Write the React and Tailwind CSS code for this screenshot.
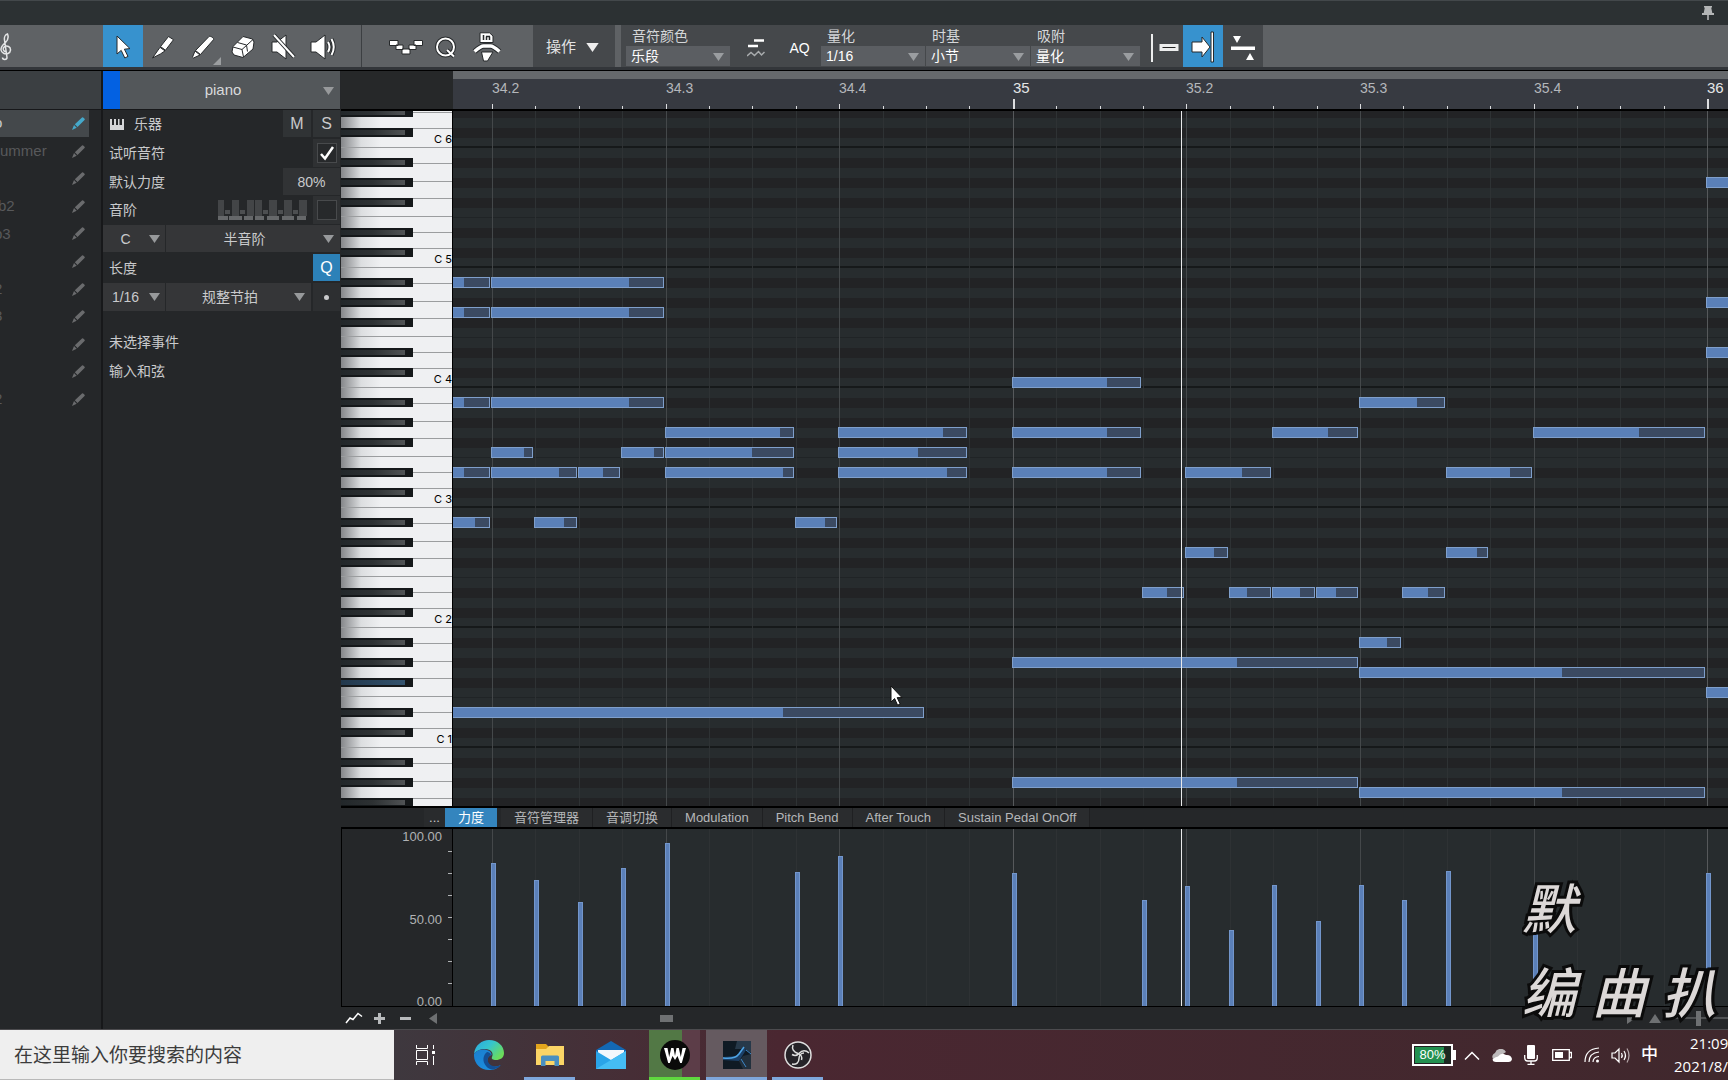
import { useState } from 'react';
import clsx from 'clsx';

// Timeline units: one step is a 16th note
const STEP = 43.4;
const ORIGIN = 39;
const PLAYHEAD = 728;

const stepX = (step) => Math.round(ORIGIN + step * STEP);

const TRACKS = [
  { name: 'o', shift: '-ml-1.5', active: true },
  { name: 'ummer', shift: '' },
  { name: '', shift: '' },
  { name: 'b2', shift: '-ml-0.5' },
  { name: 'b3', shift: '-ml-1.5' },
  { name: '', shift: '' },
  { name: '2', shift: '-ml-1.5' },
  { name: '3', shift: '-ml-1.5' },
  { name: '', shift: '' },
  { name: '', shift: '' },
  { name: '2', shift: '-ml-1.5' },
];

const BEATS = [
  { step: 0, label: '34.2' },
  { step: 4, label: '34.3' },
  { step: 8, label: '34.4' },
  { step: 12, label: '35', bar: true },
  { step: 16, label: '35.2' },
  { step: 20, label: '35.3' },
  { step: 24, label: '35.4' },
  { step: 28, label: '36', bar: true },
];

const STEPS = Array.from({ length: 29 }, (_, i) => i);

// [row, start, length, velocity]
const NOTES = [
  [14, -1, 1, 0.38], [14, 0, 4, 0.8],
  [17, -1, 1, 0.38], [17, 0, 4, 0.8],
  [26, -1, 1, 0.38], [26, 0, 4, 0.8],
  [31, 0, 1, 0.8], [31, 3, 1, 0.77], [31, 4, 3, 0.68], [31, 8, 3, 0.62],
  [33, -1, 1, 0.38], [33, 0, 2, 0.8], [33, 2, 1, 0.59], [33, 4, 3, 0.92], [33, 8, 3, 0.85],
  [38, -1, 1, 0.65], [38, 1, 1, 0.71], [38, 7, 1, 0.72],
  [29, 4, 3, 0.9], [29, 8, 3, 0.82],
  [57, -2, 12, 0.73],
  [24, 12, 3, 0.74], [29, 12, 3, 0.74], [33, 12, 3, 0.74],
  [45, 15, 1, 0.6], [45, 17, 1, 0.42], [45, 18, 1, 0.66], [45, 19, 1, 0.47], [45, 21, 1, 0.6],
  [33, 16, 2, 0.67], [41, 16, 1, 0.68],
  [29, 18, 2, 0.66],
  [52, 12, 8, 0.65], [64, 12, 8, 0.65],
  [53, 20, 8, 0.588], [65, 20, 8, 0.588],
  [50, 20, 1, 0.68], [26, 20, 2, 0.68],
  [33, 22, 2, 0.75], [41, 22, 1, 0.76],
  [29, 24, 4, 0.62],
  [4, 28, 4, 0.74], [16, 28, 4, 0.74], [21, 28, 4, 0.74], [55, 28, 4, 0.74],
];

const VELOCITIES = [
  [0, 0.81], [1, 0.71], [2, 0.585], [3, 0.78], [4, 0.92], [7, 0.755], [8, 0.85], [12, 0.75],
  [15, 0.6], [16, 0.68], [17, 0.43], [18, 0.685], [19, 0.48], [20, 0.685], [21, 0.6],
  [22, 0.765], [24, 0.6], [28, 0.75],
];

// B A# A G# G F# F E D# D C# C
const ROW_IS_BLACK = [false, true, false, true, false, true, false, false, true, false, true, false];
const OCTAVES = [6, 5, 4, 3, 2, 1, 0];
const WHITE_KEYS = [
  ['B', 'h-[16px]'],
  ['A', 'h-[18px]'],
  ['G', 'h-[17px]'],
  ['F', 'h-[18px]'],
  ['E', 'h-[16px]'],
  ['D', 'h-[16px]'],
  ['C', 'h-[19px]'],
];
const BLACK_KEYS = [
  ['A#', 'top-[10px]'],
  ['G#', 'top-[30px]'],
  ['F#', 'top-[50px]'],
  ['D#', 'top-[80px]'],
  ['C#', 'top-[100px]'],
];

const LANES = ['力度', '音符管理器', '音调切换', 'Modulation', 'Pitch Bend', 'After Touch', 'Sustain Pedal OnOff'];

function Icon({ className, viewBox, children }) {
  return (
    <svg className={clsx('shrink-0', className)} viewBox={viewBox} fill="#fff" stroke="#26292b" strokeWidth="1" strokeLinejoin="round" aria-hidden="true">
      {children}
    </svg>
  );
}

function Caret({ className }) {
  return (
    <svg className={clsx('pointer-events-none absolute', className)} width="11" height="8" viewBox="0 0 11 8" aria-hidden="true">
      <path d="M0 0h11L5.5 8z" fill="currentColor" />
    </svg>
  );
}

function ToolButton({ label, active, onClick, className, children }) {
  return (
    <button
      aria-label={label}
      aria-pressed={active}
      onClick={onClick}
      className={clsx('relative flex shrink-0 items-center justify-center self-stretch pt-0.5', active && 'bg-[#3792ce]', className)}
    >
      {children}
    </button>
  );
}

function ToolbarSelect({ label, value, className }) {
  return (
    <label className={clsx('relative flex shrink-0 flex-col', className)}>
      <span className="h-[21px] pl-[6px] leading-[22px] text-[#d5d7d9]">{label}</span>
      <select className="h-5 w-full appearance-none bg-[#5b5e62] pl-[5px] text-sm leading-5 text-white outline-none">
        <option>{value}</option>
      </select>
      <Caret className="right-[6px] bottom-[6px] text-[#9a9da0]" />
    </label>
  );
}

const TOOLS = [
  {
    id: 'arrow', label: '箭头', width: 'w-10',
    icon: <Icon className="h-6 w-4" viewBox="0 0 16 24"><path d="M2 1v18l4.2-3.6 3.6 7.6 3.2-1.6-3.6-7.2 5.6-.6z" /></Icon>,
  },
  {
    id: 'split', label: '分割', width: 'w-10',
    icon: <Icon className="h-6 w-6" viewBox="0 0 24 24"><path d="M17.500 1.500l5 3.200-8 10.500-5-3.600z" /><path d="M9 12.300l5 3.600-4.500 3L1.500 23z" /></Icon>,
  },
  {
    id: 'paint', label: '绘画', width: 'w-10', corner: true,
    icon: <Icon className="h-6 w-6" viewBox="0 0 24 24"><path d="M18 1.500c1-1 5.500 1.500 4.500 3.200L9.500 19.500 4.500 15.500z" /><path d="M4 16l5 4-6.500 3-1-.8z" /></Icon>,
  },
  {
    id: 'erase', label: '橡皮', width: 'w-10',
    icon: (
      <Icon className="h-6 w-6" viewBox="0 0 24 24">
        <path d="M12 1.500l9.500 2.500 1.500 3-1 7L12 22.500 3 20l-2-3 1-5.500z" />
        <path d="M2 12l9 2.500L22 4.500M11 14.500l1.500 7.500M6.500 7.500l9 2.500 1 6.500" fill="none" />
      </Icon>
    ),
  },
  {
    id: 'mute', label: '静音', width: 'w-10',
    icon: (
      <Icon className="h-7 w-7" viewBox="0 0 28 28">
        <path d="M3 9h5l9-7v24l-9-7H3z" />
        <path d="M5 2l20 22" stroke="#26292b" strokeWidth="4" />
        <path d="M5 2l20 22" stroke="#fff" strokeWidth="2" />
      </Icon>
    ),
  },
  {
    id: 'listen', label: '听', width: 'w-10',
    icon: (
      <Icon className="h-7 w-7" viewBox="0 0 28 28">
        <path d="M2 9h5l9-7v24l-9-7H2z" />
        <path d="M19 9q3 5 0 10M22.500 6q4.500 8 0 16" fill="none" stroke="#26292b" strokeWidth="4" />
        <path d="M19 9q3 5 0 10M22.500 6q4.500 8 0 16" fill="none" stroke="#fff" strokeWidth="2" />
      </Icon>
    ),
  },
];

function Toolbar() {
  const [tool, setTool] = useState('arrow');

  return (
    <div className="flex h-[42px] shrink-0 items-center overflow-hidden bg-[#5f6265] text-sm text-white">
      <button aria-label="乐谱" className="flex h-full w-[103px] shrink-0 items-center pt-0.5">
        <svg className="-ml-0.5 h-7 w-4" viewBox="0 0 16 28" fill="none" stroke="#e4e5e6" strokeWidth="1.500" aria-hidden="true">
          <path d="M9 24.500c0 2.500-4.500 2.500-4.500 0M9 24.500L6.500 7c-.5-3 1-5.500 3-6 1.500 3.500.5 6-2 8.500S2.500 14 3 17s4 4.500 7 3.500 3.500-5.500.5-7-6 .5-5 3.500c.4 1 1 1.500 2 1.800" />
        </svg>
      </button>
      {TOOLS.map((item) => (
        <ToolButton key={item.id} label={item.label} active={tool === item.id} onClick={() => setTool(item.id)} className={item.width}>
          {item.icon}
          {item.corner && (
            <svg className="absolute right-0.5 bottom-0.5 h-2 w-2" viewBox="0 0 8 8" aria-hidden="true">
              <path d="M8 0v8H0z" fill="#9b9ea0" />
            </svg>
          )}
        </ToolButton>
      ))}
      <div className="ml-[18px] h-full w-px shrink-0 bg-[#3c3f42]" />

      <ToolButton label="音符模式" className="ml-[22px] w-11">
        <Icon className="h-4 w-[34px]" viewBox="0 0 34 16">
          <path d="M.5 1.500h8.500v5H.5zM25 1.500h8.500v5H25zM7 6h7v4.500H7zM20 6h7v4.500h-7zM13 10h8v5h-8z" />
        </Icon>
      </ToolButton>
      <ToolButton label="量化" className="w-9">
        <svg className="h-6 w-6" viewBox="0 0 24 24" fill="none" aria-hidden="true">
          <g stroke="#26292b" strokeWidth="4"><circle cx="11.500" cy="12" r="8.500" /><path d="M13 15l7 6.500" /></g>
          <g stroke="#fff" strokeWidth="2"><circle cx="11.500" cy="12" r="8.500" /><path d="M13 15l7 6.500" /></g>
        </svg>
      </ToolButton>
      <ToolButton label="人性化" className="w-[46px]">
        <Icon className="h-[30px] w-[30px]" viewBox="0 0 30 30">
          <path d="M8 .8h9.500L21 4v6.500H8z" />
          <path d="M11.500 3v5M14.500 4.500v3.500M17.500 4.500v3.500M14 4.500h4" fill="none" strokeWidth="1.500" />
          <path d="M2.500 19.500Q9 14 11.500 14h7q2.500 0 9 5.500" fill="none" strokeWidth="5.500" />
          <path d="M2.500 19.500Q9 14 11.500 14h7q2.500 0 9 5.500" fill="none" stroke="#fff" strokeWidth="3.500" />
          <path d="M9.500 20h11.500l-5.500 9h-4z" />
        </Icon>
      </ToolButton>

      <button className="ml-[23px] flex h-full w-[82px] shrink-0 items-center bg-[#45484b] pt-0.5 pl-[13px] text-[15px] text-[#e2e3e4]">
        操作
        <svg className="ml-2.5" width="13" height="9" viewBox="0 0 11 8" aria-hidden="true"><path d="M0 0h11L5.500 8z" fill="#eee" /></svg>
      </button>

      <div className="ml-[6px] flex h-full shrink-0 items-stretch bg-[#45484b] pl-[5px]">
        <ToolbarSelect label="音符颜色" value="乐段" className="w-[104px]" />
        <button aria-label="力度曲线" className="flex w-[52px] items-center justify-center pt-1">
          <svg className="h-5 w-[18px]" viewBox="0 0 18 20" fill="none" aria-hidden="true">
            <path d="M7 2.500h10M1 8h10" stroke="#fff" strokeWidth="2.500" />
            <path d="M0 18l4-3.500 3.500 3 4-4 3 3.500 3-3" stroke="#a9acae" strokeWidth="1.500" />
          </svg>
        </button>
        <button className="w-[39px] pt-1 pr-1 text-sm text-white">AQ</button>
        <ToolbarSelect label="量化" value="1/16" className="w-[104px]" />
        <ToolbarSelect label="时基" value="小节" className="ml-px w-[104px]" />
        <ToolbarSelect label="吸附" value="量化" className="ml-px w-[109px]" />
        <button aria-label="吸附到光标" className="flex w-[43px] items-center justify-end pt-1">
          <svg className="mr-1 h-8 w-7" viewBox="0 0 28 32" aria-hidden="true">
            <path d="M0 2h2v28H0z" fill="#eceded" />
            <path d="M10 13.500h16v4H10z" fill="#222" stroke="#eceded" strokeWidth="3" />
          </svg>
        </button>
        <ToolButton label="吸附" active className="w-10">
          <Icon className="h-8 w-6" viewBox="0 0 24 32">
            <path d="M1 11h10V6l8 10-8 10v-5H1z" />
            <path d="M20 1h2.500v30H20z" />
          </Icon>
        </ToolButton>
        <button aria-label="对齐" className="flex w-10 items-center justify-center pt-1">
          <svg className="h-7 w-[26px]" viewBox="0 0 26 28" fill="#fff" aria-hidden="true">
            <path d="M1 12.500h24v3.500H1zM3 2h8l-4 7zM16 26h8l-4-7z" />
          </svg>
        </button>
      </div>
    </div>
  );
}

function Pencil({ className }) {
  return (
    <svg className={clsx('h-[13px] w-[13px]', className)} viewBox="0 0 13 13" fill="currentColor" aria-hidden="true">
      <path d="M10 .5q.8-.5 1.500.2l1 1q.6.700 0 1.400L5.500 10 2.800 7.300zM2 8.100L4.700 10.800 0 13z" />
    </svg>
  );
}

function TrackList() {
  return (
    <aside className="w-[103px] shrink-0 border-r-2 border-[#17181a] bg-[#252729]">
      <div className="h-[38px] bg-[#3b3f42]" />
      <div className="flex h-[304px] flex-col justify-between border-t border-[#17181a]">
        {TRACKS.map((track, i) => (
          <div
            key={i}
            className={clsx(
              'mr-3 flex h-[27px] items-center justify-between overflow-hidden pr-[4px] text-[15px]',
              track.active ? 'bg-[#44484b] text-[#c8cacc]' : 'text-[#58595b]'
            )}
          >
            <span className={track.shift}>{track.name}</span>
            <button aria-label="编辑音轨">
              <Pencil className={track.active ? 'text-[#45a8ca]' : 'text-[#6a6b6d]'} />
            </button>
          </div>
        ))}
      </div>
    </aside>
  );
}

function PanelSelect({ label, value, className, caret }) {
  return (
    <div className={clsx('relative h-full', className)}>
      <select
        aria-label={label}
        className="h-full w-full appearance-none bg-[#353638] pr-[17px] text-sm text-[#c9cacc] outline-none [text-align-last:center]"
      >
        <option>{value}</option>
      </select>
      <Caret className={clsx('top-[10px] text-[#97999b]', caret)} />
    </div>
  );
}

function Checkbox({ id, checked, onChange }) {
  return (
    <span className="relative flex h-[28px] w-[27px] items-center justify-center bg-[#2f3133]">
      <input id={id} type="checkbox" checked={checked} onChange={onChange} className="h-5 w-5 appearance-none border border-[#484a4c] bg-[#27292b]" />
      {checked && (
        <svg className="pointer-events-none absolute h-4 w-4" viewBox="0 0 16 16" fill="none" stroke="#fff" strokeWidth="2.500" aria-hidden="true">
          <path d="M2 9l4 4.500L14 2" />
        </svg>
      )}
    </span>
  );
}

function Inspector() {
  const [audition, setAudition] = useState(true);
  const [scale, setScale] = useState(false);

  return (
    <aside className="w-[238px] shrink-0 bg-[#252729] pr-px text-sm text-[#c9cacc]">
      <div className="relative flex h-[38px] bg-[#53575a]">
        <div className="w-[17px] bg-[#0361e2]" />
        <select aria-label="音轨" className="min-w-0 flex-1 appearance-none bg-transparent pr-[14px] text-[15px] text-[#d8dadb] outline-none [text-align-last:center]">
          <option>piano</option>
        </select>
        <Caret className="top-4 right-[6px] text-[#97999b]" />
      </div>
      <div className="border-t border-[#17181a]">
        <div className="flex h-[29px] items-start justify-between">
          <span className="flex h-[28px] items-center pl-[7px]">
            <svg className="mr-[10px] h-[11px] w-[14px]" viewBox="0 0 14 11" fill="#d5d6d8" aria-hidden="true">
              <path d="M0 0h2v6h2V0h2v6h2V0h1.500v6h2.500V0h2v11H0z" />
            </svg>
            乐器
          </span>
          <span className="flex gap-[2px]">
            <button className="h-[27px] w-[28px] bg-[#303335] text-base">M</button>
            <button className="h-[27px] w-[27px] bg-[#303335] text-base">S</button>
          </span>
        </div>
        <div className="flex h-[29px] items-start justify-between">
          <label htmlFor="audition" className="pl-[6px] leading-[28px]">试听音符</label>
          <Checkbox id="audition" checked={audition} onChange={(e) => setAudition(e.target.checked)} />
        </div>
        <div className="flex h-[28px] items-start justify-between">
          <label htmlFor="velocity" className="pl-[6px] leading-[28px]">默认力度</label>
          <input id="velocity" defaultValue="80%" className="h-[27px] w-[57px] bg-[#313335] text-center outline-none" />
        </div>
        <div className="flex h-[29px] items-start">
          <label htmlFor="scale" className="mr-auto pl-[6px] leading-[28px]">音阶</label>
          <svg className="mt-[4px] mr-[6px] h-5 w-[89px]" viewBox="0 0 89 20" aria-hidden="true">
            <path d="M0 0h6v16H0zM14 0h7v16h-7zM29 0h7v16h-7zM37 0h7v16h-7zM51 0h8v16h-8zM66 0h8v16h-8zM81 0h8v16h-8z" fill="#434547" />
            <path d="M7 10h5v4H7zM22 10h5v4h-5zM45 10h5v4h-5zM60 10h5v4h-5zM75 10h5v4h-5z" fill="#4d4f51" />
            <path d="M0 16h10v4H0zM11 16h13v4H11zM26 16h9v4h-9zM37 16h9v4h-9zM49 16h12v4H49zM64 16h12v4H64zM79 16h9v4h-9z" fill="#66686a" />
          </svg>
          <Checkbox id="scale" checked={scale} onChange={(e) => setScale(e.target.checked)} />
        </div>
        <div className="flex h-[29px] gap-px pb-[2px]">
          <PanelSelect label="根音" value="C" className="w-[62px]" caret="right-[5px]" />
          <PanelSelect label="音阶类型" value="半音阶" className="flex-1" caret="right-[6px]" />
        </div>
        <div className="flex h-[29px] items-start justify-between">
          <span className="pl-[6px] leading-[28px]">长度</span>
          <button className="h-[27px] w-[27px] bg-[#2c81b8] text-base text-white">Q</button>
        </div>
        <div className="flex h-[29px] gap-px pb-px">
          <PanelSelect label="长度" value="1/16" className="w-[62px]" caret="right-[5px]" />
          <PanelSelect label="拍型" value="规整节拍" className="flex-1" caret="right-[6px]" />
          <button aria-label="附点" className="ml-px flex w-[27px] items-center justify-center bg-[#2d2f31]">
            <span className="h-[5px] w-[5px] rounded-full bg-[#c9cacc]" />
          </button>
        </div>
        <p className="mt-[16px] h-[29px] pl-[6px] leading-[29px]">未选择事件</p>
        <p className="h-[29px] pl-[6px] leading-[29px]">输入和弦</p>
      </div>
    </aside>
  );
}

function Ruler() {
  return (
    <div className="relative min-w-0 flex-1 overflow-hidden border-t-8 border-[#66696c] bg-[#373a41]">
      {STEPS.map((step) => (
        <span
          key={step}
          className={clsx('absolute bottom-0 bg-[#dcdddf]', step === 12 || step === 28 ? 'h-[10px] w-[2px]' : step % 4 === 0 ? 'h-[5px] w-px' : 'h-[3px] w-px')}
          style={{ left: stepX(step) }}
        />
      ))}
      {BEATS.map((beat) => (
        <span
          key={beat.label}
          className={clsx('absolute top-0 leading-[18px]', beat.bar ? 'text-[15px] text-[#e4e5e7]' : 'text-sm text-[#b4b7bb]')}
          style={{ left: stepX(beat.step) }}
        >
          {beat.label}
        </span>
      ))}
    </div>
  );
}

function Keyboard() {
  return (
    <div className="relative w-[112px] shrink-0 overflow-hidden border-r border-black bg-[#edeef0]">
      <div className="-mt-[83px]">
        {OCTAVES.map((octave) => (
          <div key={octave} className="relative h-[120px]">
            {WHITE_KEYS.map(([name, height]) => (
              <button
                key={name}
                aria-label={name + octave}
                className={clsx(
                  'block w-full border-b border-[#9b9d9f] bg-linear-to-r from-[#85878a] via-[#dcdee0] via-18% to-[#eff0f2] to-36% text-right font-[Inter] text-[11px] leading-[21px] text-black',
                  height
                )}
              >
                {name === 'C' ? 'C ' + octave : ''}
              </button>
            ))}
            {BLACK_KEYS.map(([name, top]) => (
              <button
                key={name}
                aria-label={name + octave}
                className={clsx(
                  'absolute left-0 h-[9px] w-[72px] border-y-2 border-r-8 border-[#15181a] bg-linear-to-r',
                  octave === 1 && name === 'F#' ? 'from-[#22384c] to-[#34536e]' : 'from-[#22272a] via-[#2d3133] to-[#505355]',
                  top
                )}
              />
            ))}
          </div>
        ))}
      </div>
    </div>
  );
}

function GridLines() {
  return STEPS.map((step) => (
    <span
      key={step}
      className={clsx('absolute inset-y-0 w-px', step === 12 || step === 28 ? 'bg-[#56595b]' : step % 4 === 0 ? 'bg-[#44484a]' : 'bg-[#2e3234]')}
      style={{ left: stepX(step) }}
    />
  ));
}

function NoteGrid() {
  return (
    <div className="relative min-w-0 flex-1 overflow-hidden bg-[#272c2e]">
      <div className="relative -mt-[83px]">
        {OCTAVES.map((octave) => (
          <div key={octave}>
            {ROW_IS_BLACK.map((black, i) => (
              <div
                key={i}
                className={clsx('h-[10px]', black ? 'bg-[#222325]' : 'bg-[#272c2e]', i === 11 && 'border-b-2 border-[#16191a]', i === 6 && 'border-b border-[#202426]')}
              />
            ))}
          </div>
        ))}
      </div>
      <GridLines />
      {NOTES.map(([row, start, length, velocity]) => (
        <div
          key={`${row}-${start}`}
          className="absolute h-[11px] border border-[#7f9fcb] bg-[#3b4a62]"
          style={{ left: stepX(start) - 1, width: stepX(start + length) - stepX(start) - 1, top: 26 + row * 10 }}
        >
          <div className="h-full bg-[#5a80b8]" style={{ width: `${velocity * 100}%` }} />
        </div>
      ))}
      <div className="absolute inset-y-0 w-px bg-[#e8e9ea]" style={{ left: PLAYHEAD }} />
      <svg className="absolute top-[574px] left-[437px] h-[21px] w-[13px]" viewBox="0 0 13 21" aria-hidden="true">
        <path d="M1 1v16l3.600-3.400 3 6.600 2.600-1.200-3-6.400H12z" fill="#fff" stroke="#111" />
      </svg>
    </div>
  );
}

function LaneTabs() {
  const [lane, setLane] = useState('力度');

  return (
    <div className="flex h-[23px] shrink-0 items-stretch border-y-2 border-black bg-[#252729] text-[13px] leading-5">
      <button aria-label="更多" className="ml-[83px] w-[21px] bg-[#292b2d] text-center text-[#c9cacc]">...</button>
      {LANES.map((name, i) => (
        <button
          key={name}
          onClick={() => setLane(name)}
          className={clsx(
            'shrink-0 px-[13px]',
            i === 0 && 'mr-1',
            lane === name ? 'bg-[#3485be] text-white' : 'border-r border-[#1f2022] bg-[#2a2c2e] text-[#b5b7b9]'
          )}
        >
          {name}
        </button>
      ))}
    </div>
  );
}

function VelocityLane() {
  return (
    <div className="flex h-[178px] shrink-0 border-b border-black">
      <div className="flex w-[112px] shrink-0 border-x border-black bg-[#252729] text-[13px] text-[#b0b2b4]">
        <div className="-mb-[3px] flex flex-1 flex-col justify-between pr-[6px] text-right leading-[15px]">
          <span>100.00</span>
          <span>50.00</span>
          <span>0.00</span>
        </div>
        <div className="flex w-[4px] flex-col justify-between">
          {[0, 1, 2, 3, 4, 5, 6, 7, 8].map((i) => (
            <span key={i} className={clsx('h-px', i > 0 && i < 8 && 'bg-[#b0b2b4]')} />
          ))}
        </div>
      </div>
      <div className="relative min-w-0 flex-1 overflow-hidden bg-[#272c2e]">
        <GridLines />
        {VELOCITIES.map(([step, value]) => (
          <div
            key={step}
            className="absolute bottom-0 w-[5px] border-x border-t border-[#7396cb] bg-[#5b80b8]"
            style={{ left: stepX(step) - 1, height: `${value * 100}%` }}
          />
        ))}
        <div className="absolute inset-y-0 w-px bg-[#e8e9ea]" style={{ left: PLAYHEAD }} />
      </div>
    </div>
  );
}

function ScrollRow() {
  return (
    <div className="flex h-[22px] shrink-0 items-center bg-[#252729]">
      <button aria-label="自动化" className="ml-1">
        <svg className="h-3 w-[18px]" viewBox="0 0 18 12" fill="none" stroke="#fff" strokeWidth="1.500" aria-hidden="true">
          <path d="M1 11l4-5 3 1.500L13 1.500l4 3" />
        </svg>
      </button>
      <button aria-label="放大" className="ml-[11px]">
        <svg className="h-[11px] w-[11px]" viewBox="0 0 11 11" fill="#b8babc" aria-hidden="true"><path d="M4 0h3v4h4v3H7v4H4V7H0V4h4z" /></svg>
      </button>
      <button aria-label="缩小" className="ml-[15px]">
        <svg className="h-[11px] w-[11px]" viewBox="0 0 11 11" fill="#b8babc" aria-hidden="true"><path d="M0 4h11v3H0z" /></svg>
      </button>
      <button aria-label="向左" className="ml-[18px]">
        <svg className="h-[11px] w-2" viewBox="0 0 8 11" fill="#6e7072" aria-hidden="true"><path d="M8 0v11L0 5.500z" /></svg>
      </button>
      <div className="flex-1 pl-[223px]">
        <div className="h-[7px] w-[13px] bg-[#6f7173]" />
      </div>
      <button aria-label="向右">
        <svg className="h-[11px] w-2" viewBox="0 0 8 11" fill="#6e7072" aria-hidden="true"><path d="M0 0v11l8-5.500z" /></svg>
      </button>
      <svg className="ml-[14px] h-[9px] w-3" viewBox="0 0 12 9" fill="#6e7072" aria-hidden="true"><path d="M0 9h12L6 0z" /></svg>
      <div className="relative ml-1 flex h-4 w-[63px] items-center">
        <div className="h-[2px] w-full bg-[#505254]" />
        <div className="absolute left-[31px] h-[15px] w-[5px] bg-[#6e7072]" />
      </div>
    </div>
  );
}

function Watermark() {
  return (
    <div className="pointer-events-none absolute right-0 bottom-[44px] w-[206px] overflow-hidden pb-1 font-['Noto_Sans_CJK_SC',sans-serif] text-[54px] leading-[84px] font-medium whitespace-nowrap text-[#dcd8d7] italic [paint-order:stroke_fill] [-webkit-text-stroke:6px_#0b0b0b]">
      <div>默</div>
      <div className="flex gap-4">
        <span>编</span>
        <span>曲</span>
        <span>扒</span>
      </div>
    </div>
  );
}

function EdgeIcon() {
  return (
    <svg className="h-[30px] w-[30px]" viewBox="0 0 30 30" aria-hidden="true">
      <defs>
        <linearGradient id="edgeTop" x1="0" y1="0" x2="1" y2="0.600">
          <stop offset="0" stopColor="#2aa6e0" />
          <stop offset="0.500" stopColor="#35c4cf" />
          <stop offset="1" stopColor="#6bdc5a" />
        </linearGradient>
        <linearGradient id="edgeLow" x1="0" y1="0" x2="0.600" y2="1">
          <stop offset="0" stopColor="#1b7fd0" />
          <stop offset="1" stopColor="#1c8fdd" />
        </linearGradient>
      </defs>
      <path d="M0 14C1 5 8 0 15 0c9 0 15 6 15 13 0 5-4 7-8 7-3 0-5-1-4-3 2-4-1-8-7-8-5 0-9 2-11 5z" fill="url(#edgeTop)" />
      <path d="M0 14c2-3 5-4.500 9-4.500 6 0 9 3 8.500 5.500-3 1-5 4-4 7 2 5 8 6 13 3-3 4-7 5-11.500 5C6 30-.5 23 0 14z" fill="url(#edgeLow)" />
      <path d="M13 12c-4 3-5 9-1 14 2 2.500 5 4 8 3.300 3-.8 5-2 7-4.500-5 3-11 1.700-13-3-1-2.500 0-5.500 3-7-1-2-2.500-3-4-2.800z" fill="#134f94" />
    </svg>
  );
}

function ExplorerIcon() {
  return (
    <svg className="h-6 w-7" viewBox="0 0 28 24" aria-hidden="true">
      <path d="M0 1h10l3 3h14v18H0z" fill="#e3a51d" />
      <path d="M0 6h10l3-3h15v19H0z" fill="#fbd566" />
      <path d="M5 23v-9q0-1.500 1.500-1.500h15q1.500 0 1.500 1.500v9h-4.500v-5h-9v5z" fill="#4a90c0" />
    </svg>
  );
}

function MailIcon() {
  return (
    <svg className="h-7 w-[30px]" viewBox="0 0 30 28" aria-hidden="true">
      <path d="M0 9L15 0l15 9v3H0z" fill="#1368b3" />
      <path d="M2 9h26v12H2z" fill="#f3f8fc" />
      <path d="M0 10l15 9L30 10v18H0z" fill="#2aa4e8" />
      <path d="M0 28L30 10v18z" fill="#45bdf4" />
    </svg>
  );
}

function WavesIcon() {
  return (
    <svg className="h-[30px] w-[30px]" viewBox="0 0 30 30" aria-hidden="true">
      <circle cx="15" cy="15" r="15" fill="#0a0a0a" />
      <path d="M4 8h3.500l1.700 9 2-9h2.300l1.500 8 1.500-8h2.300l2 9 1.700-9H26l-4.200 15h-1.600l-2.700-7-2.500 4-2.500-4-2.700 7H8.200z" fill="#fff" />
    </svg>
  );
}

function StudioIcon() {
  return (
    <svg className="h-7 w-7" viewBox="0 0 28 28" aria-hidden="true">
      <path d="M0 0h28v28H0z" fill="#0f1a24" />
      <path d="M14 0h14v12l-6-4H12z" fill="#27394a" />
      <path d="M0 16l13-1 7-9 3 3-7 11-16-1z" fill="#1b3f66" />
      <path d="M0 17c8 1 13 0 16-4l5-7" fill="none" stroke="#4ea3e4" strokeWidth="1.500" />
      <path d="M16 20l4-5 8-2v15H20z" fill="#22303d" />
      <path d="M18 18l5 8M23 9l5 4" stroke="#3c87c9" />
    </svg>
  );
}

function ObsIcon() {
  return (
    <svg className="h-7 w-7" viewBox="0 0 28 28" fill="none" aria-hidden="true">
      <circle cx="14" cy="14" r="13" fill="#252328" stroke="#dedede" strokeWidth="1.500" />
      <g stroke="#dedede" strokeWidth="1.500">
        <path d="M9 4c-1.500 4 .5 7 5 8.500 3 1 4.500 3.500 3.500 6.500" />
        <path d="M25 12c-3-3-7-3-9.500 0-2.200 2.600-5 3-7.500 1.500" />
        <path d="M8 23c4.500.8 7-1.500 7-5.500 0-3 2-5.500 5-5.500" />
      </g>
    </svg>
  );
}

function TaskbarApp({ label, running, active, children }) {
  return (
    <button aria-label={label} className={clsx('relative flex h-full w-[61px] shrink-0 items-center justify-center', active && 'bg-[#655a60]')}>
      {children}
      {running && <span className={clsx('absolute bottom-0 h-[3px] bg-[#7ea7dc]', active ? 'inset-x-0' : 'inset-x-[5px]')} />}
    </button>
  );
}

function Taskbar() {
  return (
    <footer className="flex h-[51px] shrink-0 items-stretch overflow-hidden border-t border-[#4c4b4e] bg-linear-to-r from-[#3c3a40] from-20% via-[#4a2731] via-45% to-[#40282d] text-white">
      <input
        aria-label="搜索"
        placeholder="在这里输入你要搜索的内容"
        className="w-[394px] shrink-0 border-b border-[#b9b9b9] bg-[#efefef] pt-1 pl-[14px] text-[19px] outline-none placeholder:text-[#3c3c3c]"
      />
      <TaskbarApp label="任务视图">
        <svg className="h-5 w-5" viewBox="0 0 20 20" fill="none" stroke="#fff" aria-hidden="true">
          <path d="M1.500 0v3.500h11V0M1.500 5.500h11v9h-11zM1.500 20v-3.500h11V20M18.500 0v4M18.500 11v9" />
          <path d="M17 6h3v3h-3z" fill="#fff" stroke="none" />
        </svg>
      </TaskbarApp>
      <span className="w-[3px] shrink-0" />
      <TaskbarApp label="Edge"><EdgeIcon /></TaskbarApp>
      <TaskbarApp label="文件资源管理器" running><ExplorerIcon /></TaskbarApp>
      <TaskbarApp label="邮件"><MailIcon /></TaskbarApp>
      <button aria-label="Waves" className="relative ml-2 flex w-[51px] shrink-0 items-center justify-center bg-linear-to-r from-[#527845] from-65% to-[#5c3d48] to-65%">
        <WavesIcon />
        <span className="absolute inset-x-0 bottom-0 h-[3px] bg-[#5fd83f]" />
      </button>
      <span className="w-[6px] shrink-0" />
      <TaskbarApp label="Studio One" running active><StudioIcon /></TaskbarApp>
      <TaskbarApp label="OBS" running><ObsIcon /></TaskbarApp>

      <div className="ml-auto flex shrink-0 items-center">
        <div className="flex items-center">
          <div className="flex h-[22px] w-[41px] items-center justify-center border-2 border-white bg-linear-to-r from-[#239050] from-80% to-[#1c2a22] to-80% text-[13px] shadow-[inset_0_0_0_1px_#222]">80%</div>
          <div className="h-[10px] w-[3px] bg-white" />
        </div>
        <svg className="ml-2 h-[9px] w-4" viewBox="0 0 16 9" fill="none" stroke="#fff" strokeWidth="1.500" aria-hidden="true"><path d="M1 8.500l7-7 7 7" /></svg>
        <svg className="ml-3 h-[13px] w-5" viewBox="0 0 20 13" aria-hidden="true">
          <path d="M1 10a4 4 0 0 1 2-6 6 6 0 0 1 11-1l-6 4-6 5z" fill="#bcb9ba" />
          <path d="M4 13q-3 0-3.500-2.500Q3 8 6 7.500 9 3.500 13 5.500l1 .5q5-.5 6 4-.5 3-3.500 3z" fill="#fff" />
        </svg>
        <svg className="ml-3 h-5 w-[14px]" viewBox="0 0 14 20" aria-hidden="true">
          <rect x="3" width="8" height="14" rx="1" fill="#fff" />
          <path d="M.7 10v3q0 3 3 3h6.600q3 0 3-3v-3M7 16v3M3.500 19.300h7" fill="none" stroke="#fff" strokeWidth="1.300" />
        </svg>
        <svg className="ml-[14px] h-3 w-5" viewBox="0 0 20 12" aria-hidden="true">
          <path d="M.7.7h16.600v10.600H.7zM17.500 3.500h2v5h-2" fill="none" stroke="#fff" strokeWidth="1.300" />
          <path d="M3 3h8v6H3z" fill="#fff" />
        </svg>
        <svg className="ml-3 h-4 w-4" viewBox="0 0 16 16" fill="none" stroke="#fff" strokeWidth="1.200" aria-hidden="true">
          <path d="M1 15Q1 2 15 1M5 15Q5 6 15 5M9 15q0-5 6-5.500" />
          <circle cx="13.500" cy="14" r="1.500" fill="#fff" stroke="none" />
        </svg>
        <svg className="ml-[11px] h-[17px] w-5" viewBox="0 0 20 17" fill="none" stroke="#fff" strokeWidth="1.200" aria-hidden="true">
          <path d="M1 6h3l4-4v13l-4-4H1zM10.500 6q1.500 2.500 0 5M13 4q3 4.500 0 9" />
          <path d="M16 1.500q4 7 0 14" stroke="#b5a8ab" />
        </svg>
        <span className="ml-[10px] text-[17px] font-medium">中</span>
        <div className="ml-4 w-[54px] overflow-hidden font-['Open_Sans',sans-serif] text-[15px] leading-[23px] whitespace-nowrap">
          <div className="pl-4">21:09</div>
          <div>2021/8/</div>
        </div>
      </div>
    </footer>
  );
}

export default function App() {
  return (
    <div className="flex h-screen flex-col overflow-hidden bg-[#252729] font-['Liberation_Sans','Noto_Sans_CJK_SC',sans-serif]">
      <header className="flex h-[25px] shrink-0 items-center justify-end border-t border-[#43484b] bg-[#2c3133] pr-[14px]">
        <button aria-label="固定">
          <svg className="h-[14px] w-3" viewBox="0 0 12 14" fill="#b3b5b6" aria-hidden="true">
            <path d="M2 0h8v1l-.7 1 1 5H12v2H0V7h1.700l1-5L2 1zM5.200 9h1.600v5H5.200z" />
          </svg>
        </button>
      </header>
      <Toolbar />
      <div className="h-1 shrink-0 border-b border-black bg-[#33363a]" />
      <main className="relative flex min-h-0 flex-1">
        <TrackList />
        <Inspector />
        <section className="flex min-w-0 flex-1 flex-col">
          <div className="flex h-10 shrink-0 border-b-2 border-black">
            <div className="w-[112px] shrink-0 bg-[#262829]" />
            <Ruler />
          </div>
          <div className="flex min-h-0 flex-1">
            <Keyboard />
            <NoteGrid />
          </div>
          <LaneTabs />
          <VelocityLane />
          <ScrollRow />
        </section>
      </main>
      <Taskbar />
      <Watermark />
    </div>
  );
}
